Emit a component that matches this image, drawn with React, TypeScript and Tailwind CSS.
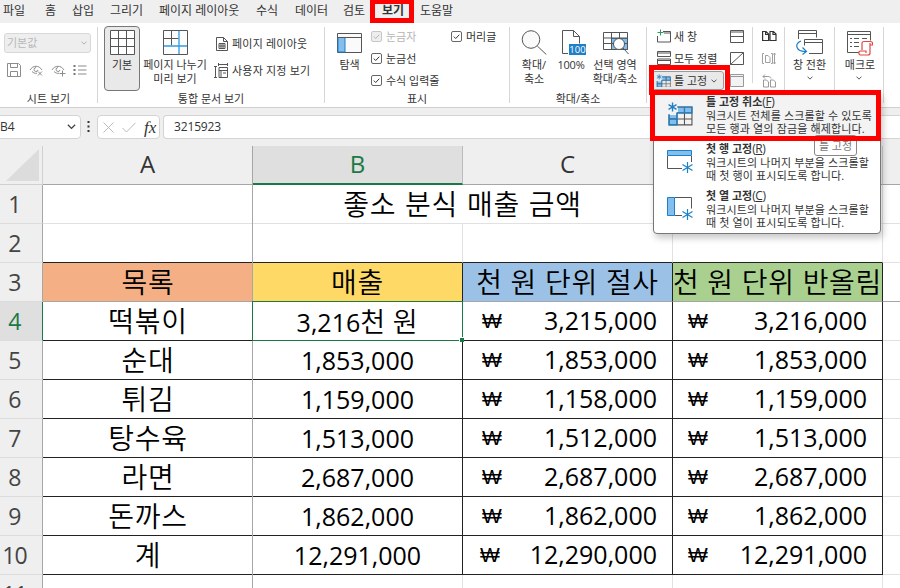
import type { ReactNode } from 'react';

interface Tab {
  label: string;
  width: string;
  active?: boolean;
}

interface DataRow {
  no: number;
  name: string;
  sales: ReactNode;
  floor: string;
  round: string;
}

const tabs: Tab[] = [
  { label: '파일', width: 'w-[42px]' },
  { label: '홈', width: 'w-[27px]' },
  { label: '삽입', width: 'w-[38px]' },
  { label: '그리기', width: 'w-[49px]' },
  { label: '페이지 레이아웃', width: 'w-[97px]' },
  { label: '수식', width: 'w-[39px]' },
  { label: '데이터', width: 'w-[48px]' },
  { label: '검토', width: 'w-[39px]' },
  { label: '보기', width: 'w-[38px]', active: true },
  { label: '도움말', width: 'w-[40px]' },
];

const rows: DataRow[] = [
  {
    no: 4,
    name: '떡볶이',
    sales: (
      <>
        3,216<span className="font-['Noto_Sans_CJK_KR'] text-[27px] font-[350] tracking-[0.8px]">천 원</span>
      </>
    ),
    floor: '3,215,000',
    round: '3,216,000',
  },
  { no: 5, name: '순대', sales: '1,853,000', floor: '1,853,000', round: '1,853,000' },
  { no: 6, name: '튀김', sales: '1,159,000', floor: '1,158,000', round: '1,159,000' },
  { no: 7, name: '탕수육', sales: '1,513,000', floor: '1,512,000', round: '1,513,000' },
  { no: 8, name: '라면', sales: '2,687,000', floor: '2,687,000', round: '2,687,000' },
  { no: 9, name: '돈까스', sales: '1,862,000', floor: '1,862,000', round: '1,862,000' },
  { no: 10, name: '계', sales: '12,291,000', floor: '12,290,000', round: '12,291,000' },
];

const menuItems = [
  {
    title: '틀 고정 취소',
    hotkey: 'F',
    lines: ['워크시트 전체를 스크롤할 수 있도록', '모든 행과 열의 잠금을 해제합니다.'],
  },
  {
    title: '첫 행 고정',
    hotkey: 'R',
    lines: ['워크시트의 나머지 부분을 스크롤할', '때 첫 행이 표시되도록 합니다.'],
  },
  {
    title: '첫 열 고정',
    hotkey: 'C',
    lines: ['워크시트의 나머지 부분을 스크롤할', '때 첫 열이 표시되도록 합니다.'],
  },
];

function Svg({ w, h, children, className = '' }: { w: number; h: number; children: ReactNode; className?: string }) {
  return (
    <svg
      width={w}
      height={h}
      viewBox={`0 0 ${w} ${h}`}
      fill="none"
      stroke="#555"
      className={`block shrink-0 ${className}`}
    >
      {children}
    </svg>
  );
}

function Chevron({ color = '#444', size = 7 }: { color?: string; size?: number }) {
  return (
    <svg width={size} height={size / 2 + 1} viewBox="0 0 8 5" fill="none" stroke={color} strokeWidth="1.2">
      <path d="M.7.7 4 4 7.3.7" />
    </svg>
  );
}

function Separator({ className = 'h-[76px]' }: { className?: string }) {
  return <div className={`mt-[4px] w-px shrink-0 bg-[#d6d6d6] ${className}`} />;
}

function GroupLabel({ children }: { children: ReactNode }) {
  return <div className="mt-auto mb-[2px] h-[13px] text-center leading-[13px]">{children}</div>;
}

function CheckItem({ label, disabled }: { label: string; disabled?: boolean }) {
  return (
    <div className={`flex h-[22px] items-center ${disabled ? 'text-[#b5b5b5]' : ''}`}>
      <Svg w={11} h={11} className="mr-[4px]">
        <rect
          x=".5"
          y=".5"
          width="10"
          height="10"
          rx="1.5"
          stroke={disabled ? '#c6c6c6' : '#666'}
          fill={disabled ? '#eee' : '#fff'}
        />
        <path d="m2.8 5.6 1.9 1.9 3.6-3.8" stroke={disabled ? '#b5b5b5' : '#333'} />
      </Svg>
      <span className="pt-[2px]">{label}</span>
    </div>
  );
}

function FreezeIcon({ size }: { size: number }) {
  return (
    <svg width={size} height={size * 0.92} viewBox="0 0 26 24" fill="none" className="block shrink-0">
      <path d="M2 13h8v10H2zM11 5h14v6H11z" fill="#83beec" />
      <path d="M10 5h15v18H2V13M2 17h23M10 11v12M17.500 5v18M10 11h15" stroke="#555" strokeWidth="1.1" />
      <path d="M11 5h14v6H10v12H2V12M17.500 5v6M2 17h8" stroke="#1e80c8" strokeWidth="1.2" />
      <path d="M5.500.5v9M1.500 2.700l8 4.600M9.500 2.700l-8 4.600" stroke="#1e80c8" strokeWidth="1.4" />
    </svg>
  );
}

function FreezeRowIcon() {
  return (
    <Svg w={26} h={24}>
      <path d="M24.500 7v6M.5 7v12.500H15" />
      <path d="M.5 1.500h24v5H.5z" fill="#83beec" stroke="#1e80c8" />
      <path d="M20.500 13v11M15.500 15.500l10 6M25.500 15.500l-10 6" stroke="#1e80c8" strokeWidth="1.2" />
    </Svg>
  );
}

function FreezeColumnIcon() {
  return (
    <Svg w={26} h={24}>
      <path d="M7.500 1.500h17v11M7.500 19.500H15" />
      <path d="M.5 1.500h7v18h-7z" fill="#83beec" stroke="#1e80c8" />
      <path d="M20.500 13v11M15.500 15.500l10 6M25.500 15.500l-10 6" stroke="#1e80c8" strokeWidth="1.2" />
    </Svg>
  );
}

function SheetViewGroup() {
  return (
    <div className="flex w-[97px] flex-col">
      <div className="mt-[10px] ml-[4px] flex h-[20px] w-[87px] items-center justify-between rounded-[3px] border border-[#d8d8d8] bg-[#eee] pr-[3px] pl-[2px] text-[#b8b8b8]">
        기본값
        <Chevron color="#aaa" size={6} />
      </div>
      <div className="mt-[8px] flex h-[17px] items-center pl-[7px]">
        <Svg w={14} h={14} className="mr-[8px]">
          <path d="M.5.5h11l2 2v11H.5zM3.500.5v4h7v-4M3.500 13.500V8.500h7v5" stroke="#8c8c8c" />
        </Svg>
        <Svg w={16} h={14} className="mr-[6px]">
          <path
            d="M1 7c3-5 9-5 12 0M3 8.500c1.500 1.500 3 2 5 1.800M7 4.500a2 2 0 1 0 2 2.500M9 8.500l4 4M13 8.500l-4 4"
            stroke="#8c8c8c"
          />
        </Svg>
        <Svg w={16} h={14} className="mr-[6px]">
          <path
            d="M1 7c3-5 9-5 12 0M3 8.500c1.500 1.500 3 2 5 1.800M7 4.500a2 2 0 1 0 2 2.500M11.500 7.500v6M8.500 10.500h6"
            stroke="#8c8c8c"
          />
        </Svg>
        <Svg w={14} h={12}>
          <path d="M.5 2h2M.5 6h2M.5 10h2" stroke="#777" strokeWidth="2" />
          <path d="M5 2h8.500M5 6h8.500M5 10h8.500" stroke="#8c8c8c" />
        </Svg>
      </div>
      <GroupLabel>시트 보기</GroupLabel>
    </div>
  );
}

function WorkbookViewGroup() {
  return (
    <div className="flex w-[226px] flex-col">
      <div className="flex">
        <div className="mt-[3px] ml-[6px] flex h-[65px] w-[36px] flex-col items-center rounded-[4px] border border-[#777] bg-[#e9e9e9] pt-[3px]">
          <Svg w={25} h={25}>
            <path d="M.5.5h24v24H.5z" fill="#fff" />
            <path d="M.5 8.500h24M.5 16.500h24M8.500.5v24M16.500.5v24" />
          </Svg>
          <span className="mt-[3px] leading-[14px]">기본</span>
        </div>
        <div className="mt-[7px] flex w-[70px] flex-col items-center">
          <Svg w={25} h={25}>
            <path d="M.5.5h24v24H.5z" fill="#fcfcfc" />
            <path d="M.5 8.500h15M8.500.5v15" />
            <path d="M16 1v23M1 16h23" stroke="#2f9be3" strokeWidth="1.3" />
          </Svg>
          <span className="mt-[3px] leading-[14px] whitespace-nowrap">페이지 나누기</span>
          <span className="leading-[13px]">미리 보기</span>
        </div>
        <div className="mt-[7px] ml-[5px] flex flex-col">
          <div className="flex h-[27px] items-center gap-[4px] pl-px">
            <Svg w={12} h={14}>
              <path d="M.5.5h7l4 4v9H.5zM7.500.5v4h4" />
              <path d="M3 6.500h6v5H3zM3 9h6M5 6.500v5M7 6.500v5" />
            </Svg>
            <span className="pt-px tracking-[0.2px]">페이지 레이아웃</span>
          </div>
          <div className="flex h-[27px] items-center gap-[4px]">
            <Svg w={14} h={15} className="-ml-px">
              <path d="M1.500 3.500v11M0 3.500h3M0 14.500h3M4 1.500h9.500M4.500 0v3M13.500 0v3M5 4.500h8.500v10H5zM5 7.500h8.500M7 7.500v7M9 10h3" />
            </Svg>
            <span className="pt-px tracking-[0.2px]">사용자 지정 보기</span>
          </div>
        </div>
      </div>
      <GroupLabel>통합 문서 보기</GroupLabel>
    </div>
  );
}

function ShowGroup() {
  return (
    <div className="flex w-[184px] flex-col">
      <div className="flex">
        <div className="mt-[10px] ml-[12px] flex w-[25px] flex-col items-center">
          <Svg w={25} h={20}>
            <path d="M.5.5h24v19H.5z" fill="#fafafa" />
            <path d="M1 4.500h7v14.500H1z" fill="#83beec" stroke="#1e80c8" />
            <path d="M.5 4.500h24" />
          </Svg>
          <span className="mt-[5px] leading-[14px] whitespace-nowrap">탐색</span>
        </div>
        <div className="mt-[2px] ml-[9px] w-[79px]">
          <CheckItem label="눈금자" disabled />
          <CheckItem label="눈금선" />
          <CheckItem label="수식 입력줄" />
        </div>
        <div className="mt-[2px] ml-px">
          <CheckItem label="머리글" />
        </div>
      </div>
      <GroupLabel>표시</GroupLabel>
    </div>
  );
}

function ZoomGroup() {
  return (
    <div className="flex w-[136px] flex-col">
      <div className="mt-[7px] flex">
        <div className="ml-[7px] flex w-[34px] flex-col items-center">
          <Svg w={26} h={25}>
            <circle cx="10" cy="9.500" r="8.800" fill="#fafafa" />
            <path d="m16.300 16 9 8.500" />
          </Svg>
          <span className="mt-[3px] leading-[14px]">확대/</span>
          <span className="leading-[13px]">축소</span>
        </div>
        <div className="ml-[3px] flex w-[34px] flex-col items-center">
          <Svg w={25} h={25} className="ml-[4px]">
            <path d="M1.500 23.500V.5h11l6 6v7M12.500.5v6h6M1.500 23.500H7" />
            <rect x="8" y="14" width="17" height="11" fill="#1e80c8" stroke="none" />
            <text
              x="16.500"
              y="23"
              fontSize="9.500"
              textAnchor="middle"
              fill="#fff"
              stroke="none"
              className="font-['Open_Sans',sans-serif]"
            >
              100
            </text>
          </Svg>
          <span className="mt-[3px] leading-[14px] tracking-[-0.2px]">100%</span>
        </div>
        <div className="ml-[3px] flex w-[48px] flex-col items-center">
          <Svg w={26} h={25} className="ml-[2px]">
            <path d="M8.500 8.500h16v11h-16z" fill="#83beec" stroke="#1e80c8" />
            <path d="M.5 2.500h24v17H.5zM.5 8h24M.5 13.500h24M8.500 2.500v17M16.500 2.500v17" />
            <circle cx="16" cy="14" r="5.500" fill="#fff" />
            <path d="m20 18 5.500 6" />
          </Svg>
          <span className="mt-[3px] leading-[14px] whitespace-nowrap">선택 영역</span>
          <span className="leading-[13px] whitespace-nowrap">확대/축소</span>
        </div>
      </div>
      <GroupLabel>확대/축소</GroupLabel>
    </div>
  );
}

function WindowGroup() {
  return (
    <div className="flex">
      <div className="flex w-[80px] flex-col pt-[2px]">
        <div className="flex h-[22px] items-center gap-[3px] pl-[10px]">
          <Svg w={14} h={14}>
            <path d="M6 2.500h7.500v10.500H.5V7M7 4h6" />
            <path d="M3.500.5v6M.5 3.500h6" stroke="#2d9d57" />
          </Svg>
          <span className="pt-[2px]">새 창</span>
        </div>
        <div className="flex h-[22px] items-center gap-[3px] pl-[10px]">
          <Svg w={14} h={14}>
            <path d="M.5.5h13v5H.5zM.5 8h13v5.500H.5zM.5 2h13M.5 9.500h13" />
          </Svg>
          <span className="pt-[2px]">모두 정렬</span>
        </div>
        <div className="mt-[2px] ml-[5px] flex h-[19px] w-[72px] items-center gap-[3px] rounded-[3px] border border-[#999] bg-[#e9e9e9] pl-[3px]">
          <FreezeIcon size={15} />
          <span className="pt-px">틀 고정</span>
          <span className="ml-px">
            <Chevron size={6} />
          </span>
        </div>
      </div>
      <div className="ml-[3px] flex w-[22px] flex-col gap-[9px] pt-[7px]">
        <Svg w={14} h={13}>
          <path d="M.5.5h13v12H.5zM.5 2h13M.5 6.500h13" />
        </Svg>
        <Svg w={14} h={13}>
          <path d="M.5.5h13v12H.5zM.5 12.500 13.500.5" />
        </Svg>
        <Svg w={14} h={13}>
          <path d="M.5.5h13v12H.5zM.5 2.500h13" stroke="#999" fill="#f3f3f3" />
        </Svg>
      </div>
      <Separator className="h-[56px]" />
      <div className="ml-[9px] flex w-[22px] flex-col gap-[9px] pt-[7px]">
        <Svg w={15} h={13}>
          <path
            d="M.6 1.500h3.400l2.600 2.500v6.500H.6zM8 1.500h3.400L14 4v6.500H8zM3.600 1.500v3h3M11 1.500v3h3"
            stroke="#333"
            strokeWidth="1.2"
          />
        </Svg>
        <Svg w={14} h={13}>
          <path
            d="M2 1.500H.5v10H2M3.500 3.500h2.500l2 2v5H3.500zM9 1.500h1.500v10H9M12.500 1v11M11.500 2.500l1-1.500 1 1.500M11.500 10.500l1 1.500 1-1.500"
            stroke="#a0a0a0"
          />
        </Svg>
        <Svg w={15} h={14}>
          <path
            d="M1.500 6h3l2 2v5h-5zM8.500 6h3l2 2v5h-5zM1 2.500h5c2 0 3 1 3 2M3 .5l-2 2 2 2"
            stroke="#999"
          />
        </Svg>
      </div>
      <Separator />
      <div className="flex w-[49px] flex-col items-center pt-[7px]">
        <Svg w={27} h={25}>
          <path d="M2.500 9V.5h18v7M2.500 3.500h18" />
          <path d="M8.500 9.500h18v14H13M8.500 9.500v6M8.500 12.500h18" />
          <path d="M5 11c-7 3-5 11 5 10.500M6.500 17.500l4 4-4 3" stroke="#1e80c8" strokeWidth="1.2" />
        </Svg>
        <span className="mt-[3px] mb-[4px] leading-[14px]">창 전환</span>
        <Chevron size={6} />
      </div>
      <Separator />
      <div className="flex w-[48px] flex-col items-center pt-[7px]">
        <Svg w={26} h={26} className="ml-px">
          <path d="M12 22.500H.5v-21h23v9M.5 4.500h23M3 8.500h2M7 8.500h5M15 8.500h5M3 12.500h2M7 12.500h5M3 16.500h2M7 16.500h5" />
          <path
            d="M15 20V13.500c0-1.500.5-2 2-2h6.500a2 2 0 0 1 2 2v1.500H23v8a2 2 0 0 1-2 2h-7.500c-2 0-2.500-4 0-4H19v2M23 15v-2"
            stroke="#e2473f"
            strokeWidth="1.2"
          />
        </Svg>
        <span className="mt-[2px] mb-[4px] ml-[2px] leading-[14px]">매크로</span>
        <Chevron size={6} />
      </div>
      <Separator />
    </div>
  );
}

function FreezeMenu() {
  const icons = [<FreezeIcon size={26} />, <FreezeRowIcon />, <FreezeColumnIcon />];
  return (
    <div className="absolute top-[91px] left-[653px] w-[228px] rounded-[4px] border border-[#777] bg-white text-[#333] shadow-[2px_4px_7px_rgba(0,0,0,0.22)]">
      {menuItems.map((item, i) => (
        <div key={item.hotkey} className={`flex h-[47px] pt-[3px] pl-[13px] ${i === 0 ? 'bg-[#f3f3f3]' : ''}`}>
          <div className="w-[39px] pt-[7px]">{icons[i]}</div>
          <div className="whitespace-nowrap">
            <div className="h-[14px] leading-[14px] font-bold">
              {item.title}
              <span className="text-[12px] font-normal tracking-[-0.4px]">
                (<span className="underline">{item.hotkey}</span>)
              </span>
            </div>
            {item.lines.map((line) => (
              <div key={line} className="h-[13px] leading-[13px] tracking-[0.15px]">
                {line}
              </div>
            ))}
          </div>
        </div>
      ))}
    </div>
  );
}

function FormulaBar() {
  return (
    <div className="flex h-[38px] items-start bg-[#efefef] pt-[7px] font-['Open_Sans',sans-serif] text-[12px]">
      <div className="-ml-[3px] flex h-[24px] w-[84px] items-center justify-between rounded-[4px] border border-[#d4d4d4] bg-white pr-[4px] pl-[2px]">
        B4
        <Chevron size={9} />
      </div>
      <Svg w={3} h={12} className="mt-[6px] ml-[6px]">
        <path d="M1.500 0v2M1.500 4.500v2M1.500 9v2" stroke="#333" strokeWidth="2" />
      </Svg>
      <div className="ml-[7px] flex h-[24px] w-[63px] items-center rounded-[4px] border border-[#d4d4d4] bg-white pl-[5px]">
        <Svg w={11} h={11} className="mr-[8px]">
          <path d="m.5.5 10 10M10.500.5l-10 10" stroke="#bbb" />
        </Svg>
        <Svg w={14} h={11} className="mr-[8px]">
          <path d="m.5 6 4 4L13.500.8" stroke="#bbb" />
        </Svg>
        <span className="font-['Liberation_Serif',serif] text-[17px] leading-[17px] italic">fx</span>
      </div>
      <div className="ml-[3px] flex h-[24px] flex-1 items-center rounded-l-[4px] border border-r-0 border-[#d4d4d4] bg-white pl-[10px] tracking-[-0.15px]">
        3215923
      </div>
    </div>
  );
}

function RowHeader({ no, active }: { no: number; active?: boolean }) {
  return (
    <div
      className={`flex h-[39px] w-[43px] shrink-0 items-center justify-center border-r border-b border-b-[#dcdcdc] pr-[13px] text-[23px] tracking-[-0.8px] ${
        active ? 'border-r-[#1a7a45] bg-[#dfdfdf] text-[#1a7a45]' : 'border-r-[#a6a6a6] bg-[#efefef] text-[#444]'
      }`}
    >
      {no}
    </div>
  );
}

function MoneyCell({ value, pad }: { value: string; pad: string }) {
  return (
    <div className={`flex w-[210px] items-center justify-between border-r border-b border-[#222] pr-[15px] ${pad}`}>
      <span className="font-['Liberation_Sans',sans-serif] text-[21px]">₩</span>
      <span>{value}</span>
    </div>
  );
}

function Sheet() {
  const head = 'flex items-center justify-center border-b border-r border-b-[#a6a6a6] pb-[3px]';
  const hangul = "font-['Noto_Sans_CJK_KR',sans-serif] font-[350] whitespace-nowrap text-[28px] pb-[3px]";
  const title = `flex items-center justify-center border-b border-b-[#a6a6a6] tracking-[0.7px] [word-spacing:1px] ${hangul}`;
  return (
    <div className="relative font-['Open_Sans',sans-serif] text-[25px] text-black">
      <div className="flex h-[39px] bg-[#efefef] text-[24px] text-[#333]">
        <div className="flex w-[43px] items-end justify-end border-r border-b border-[#d0d0d0] pr-[3px] pb-[3px]">
          <Svg w={33} h={32}>
            <path d="M33 0v32H0z" fill="#dcdcdc" stroke="none" />
          </Svg>
        </div>
        <div className={`w-[210px] border-r-[#a6a6a6] ${head}`}>A</div>
        <div className="flex w-[210px] items-center justify-center border-r border-b-2 border-r-[#bbb] border-b-[#1a7a45] bg-[#dfdfdf] pb-[2px] text-[#1a7a45]">
          B
        </div>
        <div className={`w-[210px] border-r-[#ccc] ${head}`}>C</div>
        <div className={`w-[210px] border-r-[#ccc] ${head}`}>D</div>
        <div className="flex-1 border-b border-[#a6a6a6]" />
      </div>

      <div className="flex h-[39px]">
        <RowHeader no={1} />
        <div
          className={`flex w-[840px] items-center justify-center border-r border-b border-[#e1e1e1] tracking-[0.7px] [word-spacing:2px] ${hangul}`}
        >
          좋소 분식 매출 금액
        </div>
        <div className="flex-1 border-b border-[#e1e1e1]" />
      </div>

      <div className="flex h-[39px]">
        <RowHeader no={2} />
        <div className="w-[210px] border-b border-[#222]" />
        <div className="w-[210px] border-r border-b border-r-[#e1e1e1] border-b-[#222]" />
        <div className="w-[210px] border-r border-b border-r-[#e1e1e1] border-b-[#222]" />
        <div className="w-[210px] border-r border-b border-r-[#e1e1e1] border-b-[#222]" />
        <div className="flex-1 border-b border-[#e1e1e1]" />
      </div>

      <div className="flex h-[39px]">
        <RowHeader no={3} />
        <div className={`w-[210px] bg-[#f4b084] ${title}`}>목록</div>
        <div className={`w-[210px] border-r border-r-[#222] bg-[#ffd966] ${title}`}>매출</div>
        <div className={`w-[210px] border-r border-r-[#222] bg-[#9bc2e6] ${title}`}>천 원 단위 절사</div>
        <div className={`w-[210px] border-r border-r-[#222] bg-[#a9d08e] ${title}`}>천 원 단위 반올림</div>
        <div className="flex-1 border-b border-[#a6a6a6]" />
      </div>

      {rows.map((row) => (
        <div key={row.no} className="flex h-[39px]">
          <RowHeader no={row.no} active={row.no === 4} />
          <div
            className={`flex w-[210px] items-center justify-center border-b border-[#222] tracking-[0.7px] ${hangul}`}
          >
            {row.name}
          </div>
          <div className="flex w-[210px] items-center justify-center border-r border-b border-[#222]">
            <span className="leading-[38px]">{row.sales}</span>
          </div>
          <MoneyCell value={row.floor} pad={row.no === 10 ? 'pl-[17px]' : 'pl-[19px]'} />
          <MoneyCell value={row.round} pad="pl-[15px]" />
          <div className="flex-1 border-b border-[#e1e1e1]" />
        </div>
      ))}

      <div className="flex h-[39px]">
        <RowHeader no={11} />
        <div className="w-[210px]" />
        <div className="w-[210px] border-r border-[#e1e1e1]" />
        <div className="w-[210px] border-r border-[#e1e1e1]" />
        <div className="w-[210px] border-r border-[#e1e1e1]" />
      </div>

      {/* frozen column edge */}
      <div className="absolute top-0 left-[252px] h-full w-px bg-[#a6a6a6]" />

      {/* active cell */}
      <div className="absolute top-[155px] left-[252px] h-[40px] w-[211px] border border-[#1a7a45]">
        <div className="absolute -right-[2px] -bottom-[2px] size-[5px] border-t border-l border-white bg-[#1a7a45]" />
      </div>
    </div>
  );
}

export default function App() {
  return (
    <div className="relative h-[588px] w-[900px] overflow-hidden bg-white font-['Open_Sans','Noto_Sans_CJK_KR',sans-serif] text-[11px] text-[#333]">
      <div className="flex h-[23px] items-start bg-[#efefef] pl-[3px] text-[12px] leading-[22px]">
        {tabs.map((tab) => (
          <div key={tab.label} className={`shrink-0 whitespace-nowrap ${tab.width} ${tab.active ? 'font-bold' : ''}`}>
            {tab.label}
          </div>
        ))}
      </div>

      <div className="flex h-[85px] border-b border-[#d0d0d0] bg-white">
        <SheetViewGroup />
        <Separator />
        <WorkbookViewGroup />
        <Separator />
        <ShowGroup />
        <Separator />
        <ZoomGroup />
        <Separator />
        <WindowGroup />
      </div>

      <FormulaBar />
      <Sheet />

      <FreezeMenu />
      <div className="absolute top-[135px] left-[814px] flex h-[21px] w-[43px] items-center justify-center rounded-[3px] border border-[#888] bg-white pt-px text-[#777]">
        틀 고정
      </div>

      {/* highlight frames */}
      <div className="absolute top-0 left-[370px] h-[23px] w-[44px] border-[5px] border-t-4 border-[#fe0000]" />
      <div className="absolute top-[65px] left-[649px] h-[30px] w-[81px] border-[5px] border-[#fe0000]" />
      <div className="absolute top-[90px] left-[650px] h-[51px] w-[231px] border-[5px] border-[#fe0000]" />
    </div>
  );
}
